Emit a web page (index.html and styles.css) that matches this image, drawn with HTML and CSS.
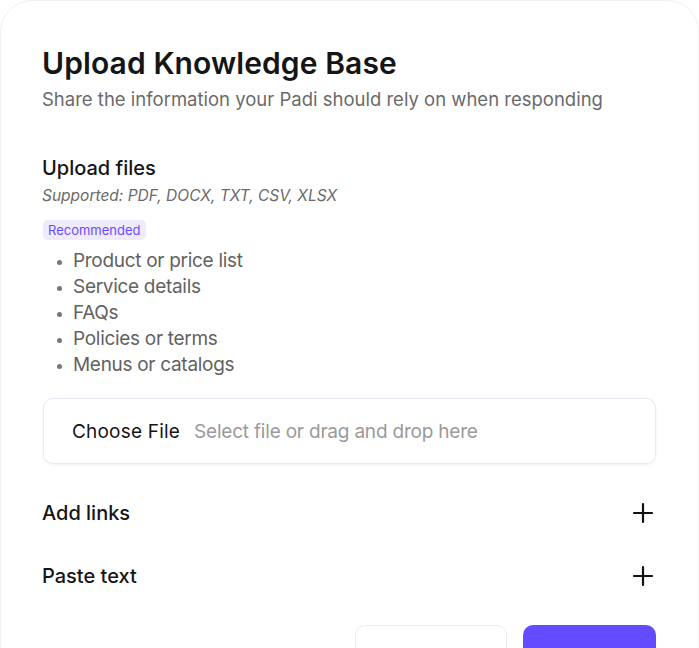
FILE: index.html
```html
<!DOCTYPE html>
<html>
<head>
<meta charset="utf-8">
<link rel="stylesheet" href="styles.css">
</head>
<body>
<div class="modal">
  <header class="head">
    <h1 class="title">Upload Knowledge Base</h1>
    <p class="subtitle">Share the information your Padi should rely on when responding</p>
  </header>

  <section class="files">
    <h2 class="section-title">Upload files</h2>
    <p class="supported">Supported: PDF, DOCX, TXT, CSV, XLSX</p>
    <span class="badge">Recommended</span>
    <ul class="list">
      <li>Product or price list</li>
      <li>Service details</li>
      <li>FAQs</li>
      <li>Policies or terms</li>
      <li>Menus or catalogs</li>
    </ul>
    <label class="file-box">
      <span class="choose">Choose File</span>
      <span class="placeholder">Select file or drag and drop here</span>
    </label>
  </section>

  <div class="rows">
    <div class="row">
      <span class="row-label">Add links</span>
      <svg class="plus" width="22" height="22" viewBox="0 0 22 22"><path d="M11 2v18M2 11h18" stroke="#111" stroke-width="2.2" stroke-linecap="round"/></svg>
    </div>
    <div class="row">
      <span class="row-label">Paste text</span>
      <svg class="plus" width="22" height="22" viewBox="0 0 22 22"><path d="M11 2v18M2 11h18" stroke="#111" stroke-width="2.2" stroke-linecap="round"/></svg>
    </div>
  </div>

  <div class="actions">
    <button class="btn btn-outline">Cancel</button>
    <button class="btn btn-primary">Upload</button>
  </div>
</div>
</body>
</html>
```

FILE: styles.css
```css
* { box-sizing: border-box; }
html, body { margin: 0; padding: 0; background: #ffffff; overflow: hidden; }
body { font-family: Inter, "Noto Sans", sans-serif; color: #151515; }

.modal {
  width: 699px;
  height: 760px;
  border: 1px solid #f1f1f3;
  border-radius: 32px;
  padding: 42px 42px 0 41px;
}

.head { margin-bottom: 42px; }
.title {
  margin: 0;
  font-size: 30px;
  font-weight: 600;
  letter-spacing: 0.1px;
  line-height: 40px;
  color: #151515;
}
.subtitle {
  margin: 3px 0 0;
  font-size: 18.5px;
  line-height: 26px;
  color: #6a6a6a;
  letter-spacing: 0;
}

.section-title {
  margin: 0;
  font-size: 20px;
  font-weight: 500;
  line-height: 28px;
  letter-spacing: 0;
  color: #151515;
}
.supported {
  margin: 2px 0 0;
  font-size: 15.5px;
  line-height: 24px;
  font-style: italic;
  color: #6a6a6a;
  letter-spacing: 0;
}
.badge {
  display: inline-block;
  margin-top: 12px;
  margin-left: 1px;
  padding: 0 5px;
  height: 20px;
  line-height: 20px;
  font-size: 13px;
  color: #6a4cff;
  background: #efebfd;
  border-radius: 5px;
  letter-spacing: 0;
}
.list {
  margin: 8px 0 0;
  padding: 0 0 0 31px;
  font-size: 19px;
  line-height: 26px;
  color: #626262;
  letter-spacing: -0.3px;
}
.list li::marker { color: #777; font-size: 14px; }

.file-box {
  display: flex;
  align-items: center;
  gap: 14px;
  margin-top: 20px;
  margin-left: 1px;
  height: 66px;
  padding: 0 28px;
  border: 1px solid #ebe9f3;
  border-radius: 10px;
  box-shadow: 0 1px 3px rgba(80, 70, 140, 0.08);
}
.choose { font-size: 19px; color: #151515; letter-spacing: 0.2px; }
.placeholder { font-size: 19px; color: #9a9a9a; letter-spacing: -0.2px; }

.rows { margin-top: 17px; }
.row {
  display: flex;
  align-items: center;
  justify-content: space-between;
  height: 63px;
  padding-right: 2px;
}
.row-label {
  font-size: 20px;
  font-weight: 500;
  color: #151515;
  letter-spacing: 0;
}
.plus { display: block; }

.actions {
  display: flex;
  justify-content: flex-end;
  gap: 16px;
  margin-top: 18px;
}
.btn {
  height: 48px;
  border-radius: 10px;
  font-family: inherit;
  font-size: 17px;
  font-weight: 500;
  padding-top: 26px;
}
.btn-outline {
  width: 152px;
  background: #fff;
  color: #222;
  border: 1px solid #ececef;
}
.btn-primary {
  width: 133px;
  background: #634bff;
  color: #fff;
  border: none;
}
```
